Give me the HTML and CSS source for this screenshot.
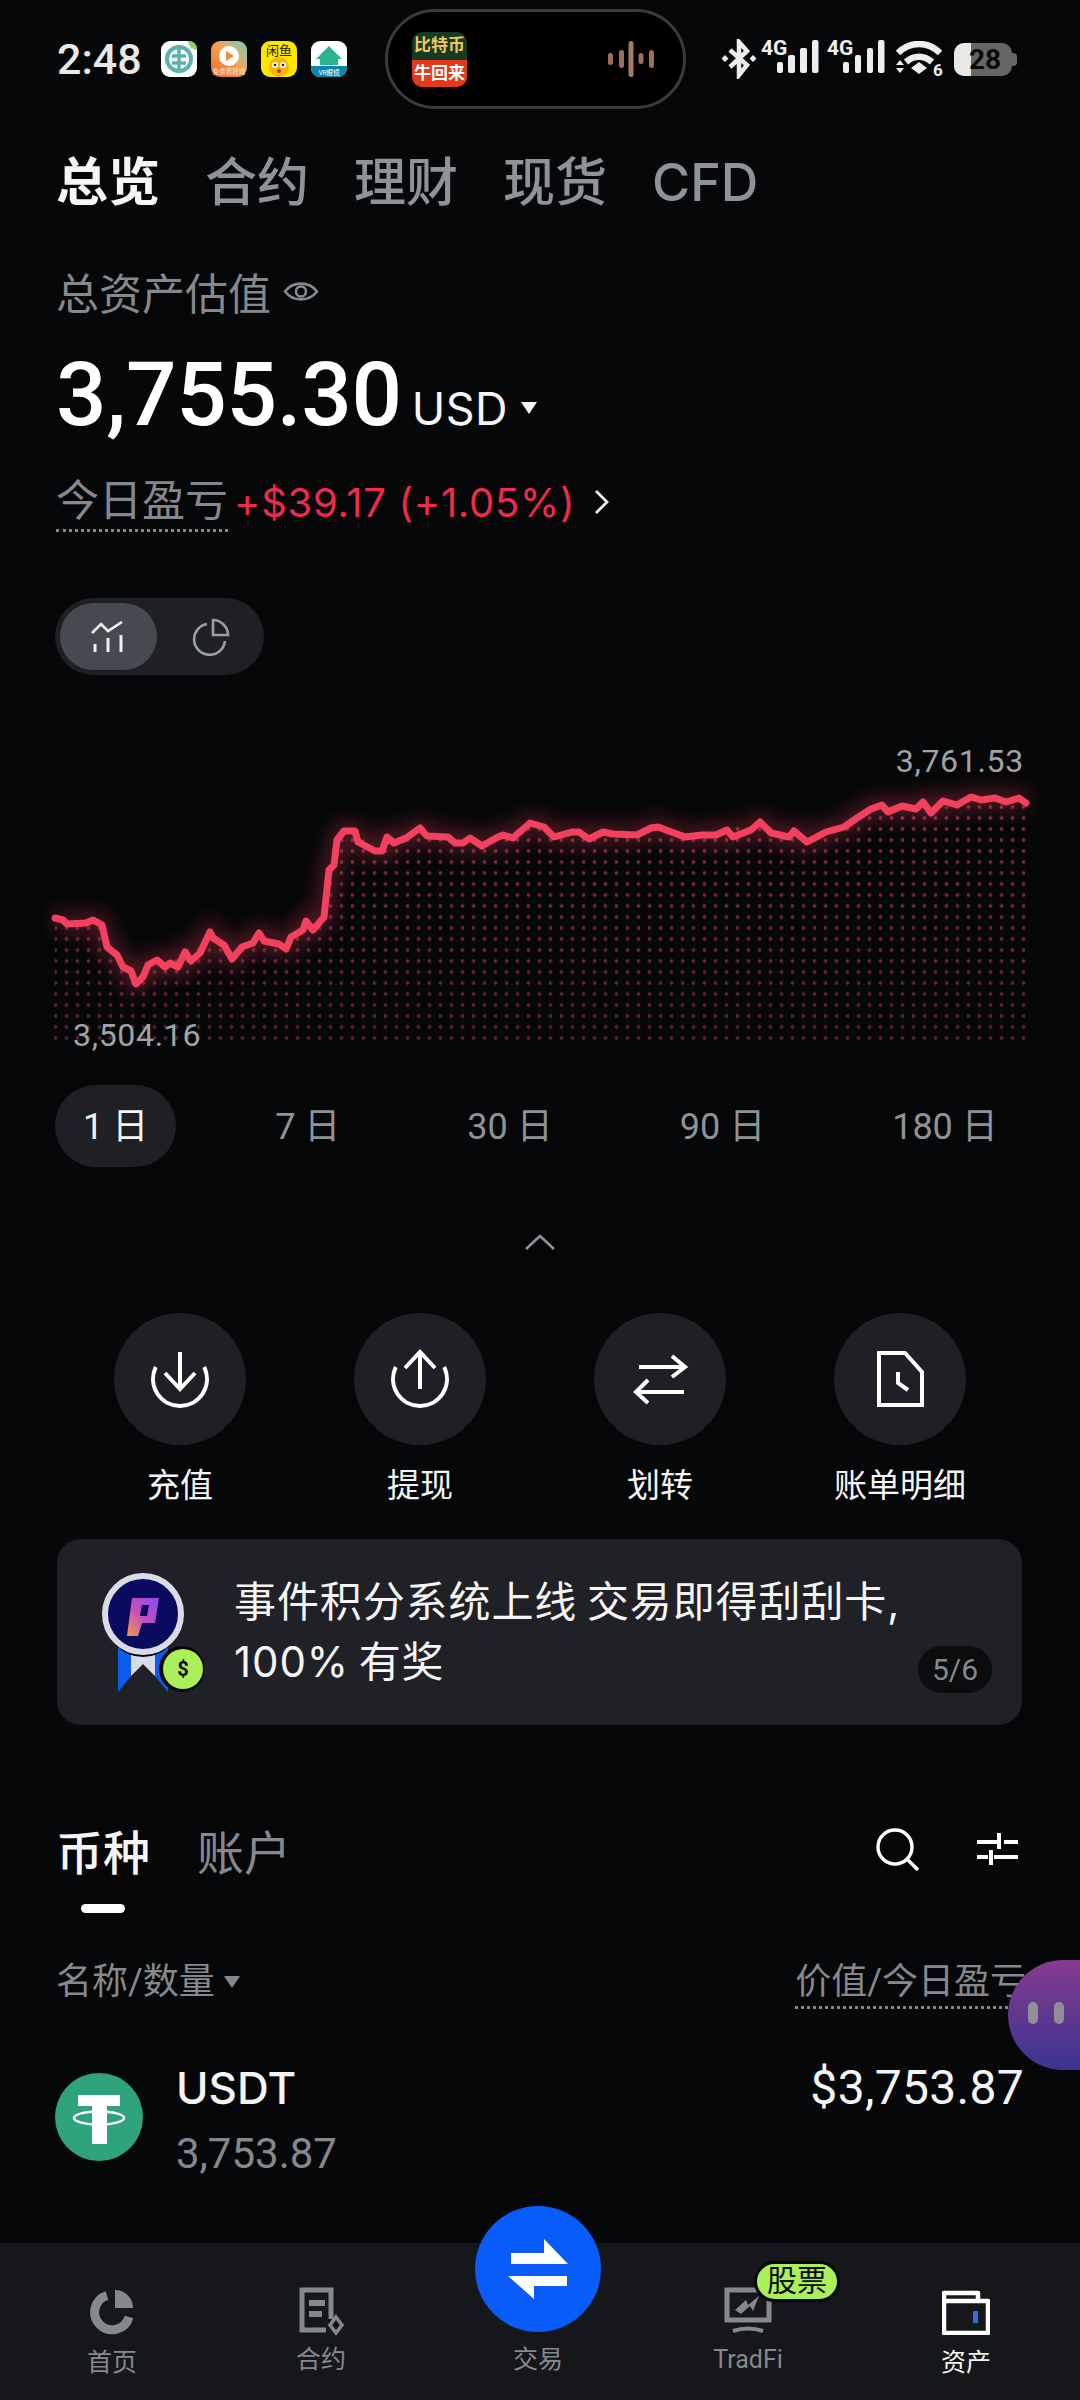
FILE: index.html
```html
<!DOCTYPE html>
<html lang="zh-CN">
<head>
    <meta charset="UTF-8">
    <title>资产</title>
    <link rel="stylesheet" href="styles.css">
</head>
<body>
    <div class="page">
        <div class="status">
            <span class="time">2:48</span>
            <div class="apps">
                <svg class="app" viewBox="0 0 36 36"><rect width="36" height="36" rx="9" fill="#fff"/><circle cx="18" cy="18" r="12" fill="none" stroke="#5cb3ac" stroke-width="4"/><path d="M18 4v28M11 15h14M11 22h14" stroke="#5cb3ac" stroke-width="3.4"/><path d="M28 0h-1a9 9 0 0 0 9 9V8a8 8 0 0 0-8-8z" fill="#8fd16a"/></svg>
                <svg class="app" viewBox="0 0 36 36"><defs><linearGradient id="appTwo" x1="0" y1="1" x2="1" y2="0"><stop offset="0" stop-color="#f4661f"/><stop offset=".55" stop-color="#f2a45a"/><stop offset="1" stop-color="#6fd3b8"/></linearGradient></defs><rect width="36" height="36" rx="9" fill="url(#appTwo)"/><circle cx="18" cy="15" r="10" fill="#fff"/><path d="M15 10l8 5-8 5z" fill="#f28a3c"/><text x="18" y="33" class="app-tiny" fill="#ffe9d9">免费看好戏</text></svg>
                <svg class="app" viewBox="0 0 36 36"><rect width="36" height="36" rx="9" fill="#ffe600"/><text x="18" y="14" class="app-mid" fill="#222">闲鱼</text><circle cx="18" cy="26" r="10" fill="#f7b500"/><circle cx="14" cy="24" r="3" fill="#fff"/><circle cx="22" cy="24" r="3" fill="#fff"/><circle cx="14" cy="24" r="1.3" fill="#222"/><circle cx="22" cy="24" r="1.3" fill="#222"/><circle cx="18" cy="30" r="2" fill="#c8321e"/></svg>
                <svg class="app" viewBox="0 0 36 36"><defs><clipPath id="appFour"><rect width="36" height="36" rx="9"/></clipPath></defs><g clip-path="url(#appFour)"><rect width="36" height="36" fill="#fff"/><rect y="25" width="36" height="11" fill="#0e86a8"/><path d="M18 5L5 18h4v6h18v-6h4z" fill="#27b58c"/><text x="18" y="33.500" class="app-tiny" fill="#fff">VR眼镜</text></g></svg>
            </div>
            <div class="island">
                <div class="island-app">
                    <div class="island-top">比特币</div>
                    <div class="island-bottom">牛回来</div>
                </div>
                <svg class="wave" viewBox="0 0 46 36"><g fill="#9c6f5c"><rect y="12" width="5" height="12" rx="2.500"/><rect x="11" y="9" width="5" height="18" rx="2.500"/><rect x="20.500" width="5" height="36" rx="2.500" fill="#a87a66"/><rect x="30.500" y="12" width="5" height="11" rx="2.500"/><rect x="41" y="9" width="5" height="18" rx="2.500"/></g></svg>
            </div>
            <div class="indicators">
                <svg class="bt" viewBox="0 0 36 40"><path d="M9 11l17 15-8 10V3l8 9-17 16" fill="none" stroke="#eee" stroke-width="4.500"/><path d="M4 16l3.500 3.500L4 23 .5 19.500zM32 16l3.500 3.500L32 23l-3.500-3.500z" fill="#eee"/></svg>
                <svg class="signal" viewBox="0 -10 58 48"><text x="0" y="15" class="net">4G</text><g fill="#eee"><rect x="16" y="22" width="6" height="11" rx="2"/><rect x="27" y="15" width="7" height="18" rx="2"/><rect x="39" y="8" width="7" height="25" rx="2"/><rect x="51" y="0" width="6.500" height="33" rx="2"/></g></svg>
                <svg class="signal" viewBox="0 -10 58 48"><text x="0" y="15" class="net">4G</text><g fill="#eee"><rect x="16" y="22" width="6" height="11" rx="2"/><rect x="28" y="15" width="6" height="18" rx="2"/><rect x="40" y="8" width="6" height="25" rx="2"/><rect x="51" y="0" width="6.500" height="33" rx="2"/></g></svg>
                <svg class="wifi" viewBox="0 0 50 44"><path d="M2 12c12-12 30-12 42 0M10 21c8-7 18-7 26 0" fill="none" stroke="#eee" stroke-width="6.500"/><path d="M15 27l8-6 8 6-8 6z" fill="#eee"/><path d="M0 24l4-5 4 5zM0 27l4 5 4-5z" fill="#eee"/><text x="37" y="35" class="wifi-six">6</text></svg>
                <div class="battery">
                    <span class="battery-fill"></span>
                    <span class="battery-num">28</span>
                </div>
            </div>
        </div>

        <nav class="top-tabs">
            <span class="top-tab is-active">总览</span>
            <span class="top-tab">合约</span>
            <span class="top-tab">理财</span>
            <span class="top-tab">现货</span>
            <span class="top-tab">CFD</span>
        </nav>

        <div class="total-label">
            <span>总资产估值</span>
            <svg class="eye" viewBox="0 0 36 27"><path d="M2 13.500C10 3 26 3 34 13.500 26 24 10 24 2 13.500z" fill="none" stroke="#85888d" stroke-width="2.600"/><circle cx="18" cy="13.500" r="5" fill="none" stroke="#85888d" stroke-width="2.600"/></svg>
        </div>

        <div class="balance">
            <span class="balance-num">3,755.30</span>
            <span class="balance-cur">USD</span>
            <span class="caret caret-white"></span>
        </div>

        <div class="pnl">
            <span class="dotted pnl-label">今日盈亏</span>
            <span class="pnl-value">+$39.17 (+1.05%)</span>
            <svg class="pnl-arrow" viewBox="0 0 18 26"><path d="M3 2l11 11L3 24" fill="none" stroke="#eee" stroke-width="2.800"/></svg>
        </div>

        <div class="toggle">
            <span class="toggle-btn is-active">
                <svg class="toggle-line" viewBox="0 0 34 32"><path d="M1 12l9-9 7 7L31 1" fill="none" stroke="#eee" stroke-width="2.600"/><path d="M4 23v8M17 17v14M30 14v17" stroke="#eee" stroke-width="3"/></svg>
            </span>
            <span class="toggle-btn">
                <svg class="toggle-pie" viewBox="0 0 38 38"><path d="M15 6a15.500 15.500 0 1 0 18 17" fill="none" stroke="#9a9da1" stroke-width="2.600"/><path d="M21 2c8 0 15 7 15 15H21z" fill="none" stroke="#9a9da1" stroke-width="2.600"/></svg>
            </span>
        </div>

        <div class="chart">
            <svg class="chart-svg" viewBox="0 0 1080 340">
                <defs>
                    <pattern id="dots" x="-5" y="4.500" width="11" height="11" patternUnits="userSpaceOnUse">
                        <circle cx="5.500" cy="5.500" r="1.900" fill="#8a3044"/>
                    </pattern>
                    <linearGradient id="dotFade" x1="0" y1="0" x2="0" y2="1">
                        <stop offset="0" stop-color="#fff"/>
                        <stop offset="1" stop-color="#999"/>
                    </linearGradient>
                    <mask id="dotMask"><rect width="1080" height="340" fill="url(#dotFade)"/></mask>
                    <clipPath id="under">
                        <path d="M55 198 L67 204 86 203 102 205 107 227 123 247 136 264 148 245 165 247 185 232 210 212 232 239 259 213 286 229 306 201 324 197 329 150 337 120 355 111 375 131 420 108 463 123 482 126 530 103 554 117 589 119 658 107 685 117 760 102 807 122 857 98 882 85 931 93 971 77 1026 83 V322 H54 Z"/>
                    </clipPath>
                    <filter id="glow" x="-10%" y="-30%" width="120%" height="160%">
                        <feGaussianBlur stdDeviation="10"/>
                    </filter>
                    <polyline id="line" points="55,198 63,200 67,204 86,203 93,200 102,205 107,227 117,235 123,247 131,251 136,264 143,257 148,245 157,240 165,247 170,243 178,247 185,232 191,241 200,233 210,212 213,218 224,225 232,239 242,227 253,223 259,213 264,221 279,224 286,229 291,217 303,210 306,201 313,210 324,197 329,150 334,145 337,120 344,111 355,111 358,122 375,131 382,131 387,117 394,123 406,118 420,108 427,116 448,117 455,123 463,123 470,118 482,126 496,118 503,115 513,118 530,103 544,107 554,117 572,112 579,112 589,119 603,112 613,114 637,115 651,108 658,107 685,117 702,115 716,115 727,110 733,117 751,110 760,102 771,113 789,117 794,111 807,122 826,112 844,107 857,98 871,89 882,85 888,92 902,86 916,89 923,82 931,93 943,81 957,85 971,77 981,80 995,78 1006,82 1019,78 1026,83"/>
                </defs>
                <g mask="url(#dotMask)">
                    <rect x="50" y="60" width="980" height="262" fill="url(#dots)" clip-path="url(#under)"/>
                </g>
                <use href="#line" class="line-glow" filter="url(#glow)"/>
                <use href="#line" class="line-main"/>
            </svg>
            <span class="chart-high">3,761.53</span>
            <span class="chart-low">3,504.16</span>
        </div>

        <div class="ranges">
            <span class="range is-active">1 日</span>
            <span class="range">7 日</span>
            <span class="range">30 日</span>
            <span class="range">90 日</span>
            <span class="range">180 日</span>
        </div>

        <svg class="collapse" viewBox="0 0 30 16"><path d="M1 15L15 2l14 13" fill="none" stroke="#8f9296" stroke-width="2.600"/></svg>

        <div class="actions">
            <div class="action">
                <span class="action-btn">
                    <svg class="action-icon" viewBox="0 0 64 64"><path d="M7.800 20A27 27 0 1 0 56.200 20M32 5v37M17 26l15 16 15-16"/></svg>
                </span>
                <span class="action-label">充值</span>
            </div>
            <div class="action">
                <span class="action-btn">
                    <svg class="action-icon" viewBox="0 0 64 64"><path d="M7.800 20A27 27 0 1 0 56.200 20M32 42V5M17 21L32 5l15 16"/></svg>
                </span>
                <span class="action-label">提现</span>
            </div>
            <div class="action">
                <span class="action-btn">
                    <svg class="action-icon" viewBox="0 0 64 64"><path d="M11 20h45M44 9l13 11-13 10M56 45H9M20 33L8 45l12 11"/></svg>
                </span>
                <span class="action-label">划转</span>
            </div>
            <div class="action">
                <span class="action-btn">
                    <svg class="action-icon" viewBox="0 0 64 64"><path d="M11 6h26l17 19v33H11zM30 25v11l10 7"/></svg>
                </span>
                <span class="action-label">账单明细</span>
            </div>
        </div>

        <div class="banner">
            <svg class="medal" viewBox="0 0 104 124">
                <defs>
                    <linearGradient id="logoGrad" x1="0" y1="1" x2="1" y2="0">
                        <stop offset="0" stop-color="#f09a4a"/>
                        <stop offset=".5" stop-color="#c04fc0"/>
                        <stop offset="1" stop-color="#8a4bf0"/>
                    </linearGradient>
                </defs>
                <path d="M18 74v46l13-16V74zM55 74v30l13 16V74z" fill="#0b5cf0"/>
                <path d="M31 74h24v30L43 92 31 104z" fill="#d9dce8"/>
                <circle cx="43" cy="48" r="37" fill="#060708"/>
                <circle cx="43" cy="42" r="38" fill="#0a0a5e" stroke="#d9dce8" stroke-width="6"/>
                <path d="M32 26h27l-4 25H42l-4 13H27zM42 33l-2 11h7l2-11z" fill="url(#logoGrad)" fill-rule="evenodd"/>
                <circle cx="82" cy="97" r="23" fill="#060708"/>
                <circle cx="83" cy="97" r="20" fill="#aaf05a"/>
                <text x="83" y="104" class="medal-coin">$</text>
            </svg>
            <p class="banner-text">事件积分系统上线 交易即得刮刮卡,<br>100% 有奖</p>
            <span class="banner-page">5/6</span>
        </div>

        <div class="asset-head">
            <div class="asset-tabs">
                <span class="asset-tab is-active">币种</span>
                <span class="asset-tab">账户</span>
            </div>
            <div class="asset-tools">
                <svg class="search" viewBox="0 0 44 44"><circle cx="20" cy="20" r="17" fill="none" stroke="#fff" stroke-width="3.400"/><path d="M32 32l11 11" stroke="#fff" stroke-width="3.400"/></svg>
                <svg class="sliders" viewBox="0 0 42 34"><path d="M1 10h20M28 10h14M23 1v16M1 25h11M18 25h24M15 18v15" stroke="#fff" stroke-width="4" fill="none"/></svg>
            </div>
        </div>
        <span class="asset-mark"></span>

        <div class="list-head">
            <div class="list-name">
                <span>名称/数量</span>
                <span class="caret caret-grey"></span>
            </div>
            <span class="dotted">价值/今日盈亏</span>
        </div>

        <div class="coin">
            <svg class="coin-icon" viewBox="0 0 88 88">
                <circle cx="44" cy="44" r="44" fill="#2fa37c"/>
                <path d="M23 22h42v11H52v38H37V33H23z" fill="#fff"/>
                <ellipse cx="44" cy="45" rx="25" ry="6.500" fill="none" stroke="#fff" stroke-width="2.400"/>
            </svg>
            <div class="coin-name">
                <span class="coin-title">USDT</span>
                <span class="coin-amount">3,753.87</span>
            </div>
            <span class="coin-value">$3,753.87</span>
        </div>

        <nav class="bottom-nav">
            <div class="nav-item">
                <svg class="nav-icon" viewBox="0 0 48 48"><path d="M19 8.500A17.500 17.500 0 1 0 41 30" fill="none" stroke="#85888d" stroke-width="9"/><path d="M27 21V3a18 18 0 0 1 18 18z" fill="#85888d"/></svg>
                <span class="nav-label nav-label-low">首页</span>
            </div>
            <div class="nav-item">
                <svg class="nav-icon" viewBox="0 0 48 48"><path d="M34 32V3H5v40h24" fill="none" stroke="#85888d" stroke-width="5"/><path d="M12 13h16v6H12zM12 24h13v6H12z" fill="#85888d"/><path d="M39 30l6 8-6 8-6-8z" fill="none" stroke="#85888d" stroke-width="3.500"/></svg>
                <span class="nav-label">合约</span>
            </div>
            <div class="nav-item">
                <span class="trade-btn">
                    <svg class="trade-icon" viewBox="0 0 126 126"><path d="M69 33l24 25H36V47h33zM59 93L33 70h59v10H59z" fill="#fff"/></svg>
                </span>
                <span class="nav-label">交易</span>
            </div>
            <div class="nav-item">
                <svg class="nav-icon" viewBox="0 0 48 48"><path d="M3 3h42v30H3z" fill="none" stroke="#85888d" stroke-width="5"/><path d="M11 23l11-10 2 5 11-9-6 15-3-5-9 8z" fill="#85888d"/><path d="M9 44q15-5 30 0" fill="none" stroke="#85888d" stroke-width="4"/></svg>
                <span class="nav-badge">股票</span>
                <span class="nav-label">TradFi</span>
            </div>
            <div class="nav-item">
                <svg class="nav-icon" viewBox="0 0 48 48"><path d="M2 6h34v8h10v32H2zM2 14h34" fill="none" stroke="#fff" stroke-width="4.500" stroke-linejoin="round"/><rect x="31" y="24" width="5" height="12" fill="#2a6fe8"/></svg>
                <span class="nav-label nav-label-low is-active">资产</span>
            </div>
        </nav>

        <div class="bubble">
            <span class="bubble-eye"></span>
            <span class="bubble-eye"></span>
        </div>
    </div>
</body>
</html>
```

FILE: styles.css
```css
* {
    box-sizing: border-box;
}
body {
    margin: 0;
    background-color: #060708;
    color: #f5f5f5;
    font-family: Roboto, "Noto Sans CJK SC", sans-serif;
}
svg {
    display: block;
}
.page {
    position: relative;
    display: flex;
    flex-direction: column;
    width: 1080px;
    height: 2400px;
    overflow: hidden;
}

/* status bar */
.status {
    display: flex;
    align-items: center;
    height: 118px;
    padding-left: 57px;
}
.time {
    width: 104px;
    font-size: 43px;
    font-weight: 500;
    color: #e8e8e8;
}
.apps {
    display: flex;
    gap: 14px;
}
.app {
    width: 36px;
    height: 36px;
}
.app-tiny {
    font-size: 6.5px;
    text-anchor: middle;
}
.app-mid {
    font-size: 13px;
    text-anchor: middle;
}
.island {
    display: flex;
    align-items: center;
    justify-content: space-between;
    width: 301px;
    height: 100px;
    margin-left: 38px;
    padding: 0 29px 0 24px;
    background-color: #000;
    border: 3px solid #3a3b3c;
    border-radius: 50px;
}
.island-app {
    width: 55px;
    height: 55px;
    border-radius: 10px;
    overflow: hidden;
    font-size: 17px;
    font-weight: 700;
    line-height: 27px;
    white-space: nowrap;
    text-align: center;
}
.island-top {
    height: 28px;
    background-color: #163a24;
    color: #f2c65a;
}
.island-bottom {
    height: 27px;
    background-color: #e2391c;
    color: #fff;
}
.wave {
    width: 46px;
    height: 36px;
}
.indicators {
    display: flex;
    align-items: center;
    margin-left: 35px;
}
.bt {
    width: 36px;
    height: 40px;
}
.signal {
    width: 58px;
    height: 48px;
    margin-left: 4px;
    margin-top: -11px;
}
.signal + .signal {
    margin-left: 8px;
}
.net {
    font-size: 21px;
    font-weight: 700;
    fill: #eee;
}
.wifi {
    width: 50px;
    height: 44px;
    margin: 8px -4px 0 11px;
}
.wifi-six {
    font-size: 17px;
    font-weight: 700;
    fill: #eee;
}
.battery {
    position: relative;
    display: flex;
    align-items: center;
    width: 58px;
    height: 33px;
    margin-left: 12px;
    background-color: #646664;
    border-radius: 10px;
}
.battery::after {
    content: "";
    position: absolute;
    right: -5px;
    top: 10px;
    width: 5px;
    height: 13px;
    background-color: #646664;
    border-radius: 0 4px 4px 0;
}
.battery-fill {
    width: 17px;
    height: 33px;
    background-color: #e8e8e8;
    border-radius: 10px 0 0 10px;
}
.battery-num {
    margin-left: -2px;
    font-size: 28px;
    font-weight: 700;
    color: #0a0a0a;
}

/* summary */
.top-tabs {
    display: flex;
    gap: 45px;
    height: 70px;
    margin-top: 30px;
    padding-left: 56px;
    font-family: Inter, "Noto Sans CJK SC", sans-serif;
    font-size: 52px;
    line-height: 70px;
    color: #8f9296;
    font-weight: 500;
}
.top-tab.is-active {
    color: #f5f5f5;
    font-weight: 700;
}
.total-label {
    display: flex;
    align-items: center;
    gap: 12px;
    height: 60px;
    margin-top: 43px;
    padding-left: 56px;
    font-size: 43px;
    color: #85888d;
}
.eye {
    width: 36px;
    height: 27px;
}
.balance {
    display: flex;
    align-items: baseline;
    height: 100px;
    margin-top: 24px;
    padding-left: 56px;
    line-height: 100px;
}
.balance-num {
    font-size: 89px;
    font-weight: 500;
    letter-spacing: -.3px;
    color: #fff;
}
.balance-cur {
    margin-left: 10px;
    font-family: Inter, sans-serif;
    font-size: 45px;
    letter-spacing: .5px;
}
.caret {
    display: inline-block;
    border-style: solid;
    border-color: transparent;
    border-width: 12px 8px 0;
}
.caret-white {
    margin-left: 13px;
    border-top-color: #f5f5f5;
    transform: translateY(-11px);
}
.caret-grey {
    margin-left: 9px;
    border-top-color: #85888d;
}
.pnl {
    display: flex;
    align-items: center;
    height: 60px;
    margin-top: 27px;
    padding-left: 56px;
}
.dotted {
    border-bottom: 3px dotted #85888d;
}
.pnl-label {
    font-size: 43px;
    line-height: 56px;
    color: #85888d;
}
.pnl-value {
    margin-left: 6px;
    font-family: Inter, sans-serif;
    font-size: 40px;
    letter-spacing: .7px;
    color: #f0294f;
}
.pnl-arrow {
    width: 18px;
    height: 26px;
    margin-left: 18px;
}
.toggle {
    display: flex;
    gap: 6px;
    width: 209px;
    height: 77px;
    margin: 66px 0 0 55px;
    padding: 5px;
    background-color: #1e2024;
    border-radius: 39px;
}
.toggle-btn {
    display: flex;
    align-items: center;
    justify-content: center;
    width: 99px;
    height: 67px;
    border-radius: 34px;
}
.toggle-btn.is-active {
    background-color: #464a50;
}
.toggle-line {
    width: 34px;
    height: 32px;
}
.toggle-pie {
    width: 38px;
    height: 38px;
}

/* chart */
.chart {
    position: relative;
    height: 340px;
    margin-top: 45px;
}
.chart-svg {
    width: 1080px;
    height: 340px;
}
.line-glow {
    fill: none;
    stroke: #f0405e;
    stroke-width: 14;
    opacity: .4;
}
.line-main {
    fill: none;
    stroke: #f4405f;
    stroke-width: 7;
    stroke-linejoin: round;
    stroke-linecap: round;
}
.chart-high, .chart-low {
    position: absolute;
    font-size: 32px;
    letter-spacing: .7px;
    line-height: 40px;
    color: #a0a3a7;
}
.chart-high {
    right: 56px;
    top: 21px;
}
.chart-low {
    left: 73px;
    top: 295px;
}
.ranges {
    display: flex;
    gap: 71px;
    height: 82px;
    margin: 25px 0 0 55px;
    font-size: 36px;
    line-height: 85px;
    color: #8f9296;
}
.range {
    padding: 0 28px;
    border-radius: 41px;
}
.range.is-active {
    background-color: #1e2024;
    color: #f5f5f5;
}
.collapse {
    width: 30px;
    height: 16px;
    margin: 67px 0 0 525px;
}

/* actions */
.actions {
    display: grid;
    grid-template-columns: repeat(4, 240px);
    margin: 63px 0 0 60px;
}
.action {
    display: flex;
    flex-direction: column;
    align-items: center;
}
.action-btn {
    display: flex;
    align-items: center;
    justify-content: center;
    width: 132px;
    height: 132px;
    background-color: #1e2024;
    border-radius: 50%;
}
.action-icon {
    width: 64px;
    height: 64px;
    fill: none;
    stroke: #fff;
    stroke-width: 4;
}
.action-label {
    margin-top: 19px;
    font-size: 33px;
    line-height: 44px;
}

/* banner */
.banner {
    position: relative;
    display: flex;
    gap: 30px;
    height: 186px;
    margin: 31px 58px 0 57px;
    padding: 33px 0 0 43px;
    background-color: #1f2126;
    border-radius: 24px;
}
.medal {
    width: 104px;
    height: 124px;
}
.medal-coin {
    font-size: 20px;
    font-weight: 700;
    text-anchor: middle;
    fill: #0a0a0a;
}
.banner-text {
    margin: 0;
    font-family: Inter, "Noto Sans CJK SC", sans-serif;
    font-size: 42px;
    letter-spacing: .9px;
    word-spacing: -3px;
    line-height: 60px;
    color: #f5f5f5;
}
.banner-page {
    position: absolute;
    right: 30px;
    bottom: 32px;
    width: 74px;
    height: 47px;
    background-color: #0b0c0e;
    border-radius: 24px;
    font-size: 30px;
    line-height: 47px;
    text-align: center;
    color: #85888d;
}

/* asset list */
.asset-head {
    display: flex;
    align-items: center;
    justify-content: space-between;
    height: 60px;
    margin-top: 94px;
    padding: 0 62px 0 56px;
}
.asset-tabs {
    display: flex;
    gap: 47px;
    font-size: 47px;
    color: #85888d;
}
.asset-tab.is-active {
    color: #f5f5f5;
    font-weight: 500;
}
.asset-tools {
    display: flex;
    align-items: center;
    gap: 57px;
}
.search {
    width: 44px;
    height: 44px;
}
.sliders {
    width: 42px;
    height: 34px;
}
.asset-mark {
    width: 44px;
    height: 9px;
    margin: 25px 0 0 81px;
    background-color: #fff;
    border-radius: 5px;
}
.list-head {
    display: flex;
    align-items: flex-start;
    justify-content: space-between;
    height: 56px;
    margin-top: 45px;
    padding: 0 54px 0 56px;
    font-size: 36px;
    line-height: 48px;
    color: #85888d;
}
.list-name {
    display: flex;
    align-items: center;
}
.coin {
    display: flex;
    margin-top: 59px;
    padding: 0 56px 0 55px;
}
.coin-icon {
    width: 88px;
    height: 88px;
}
.coin-name {
    display: flex;
    flex-direction: column;
    margin-left: 33px;
    flex: 1;
}
.coin-title {
    margin-top: -12px;
    font-family: Inter, sans-serif;
    font-size: 44px;
    font-weight: 500;
    line-height: 54px;
}
.coin-amount {
    margin-top: 11px;
    font-size: 42px;
    line-height: 56px;
    color: #85888d;
}
.coin-value {
    margin-top: -12px;
    font-size: 48px;
    letter-spacing: .3px;
    line-height: 54px;
}

/* bottom nav */
.bottom-nav {
    display: grid;
    grid-template-columns: 209px 217px 210px 218px 160px;
    justify-items: start;
    height: 157px;
    margin-top: auto;
    padding-left: 32px;
    background-color: #15171a;
}
.nav-item {
    position: relative;
    display: flex;
    flex-direction: column;
    align-items: center;
    width: 160px;
    padding-top: 44px;
}
.nav-icon {
    width: 48px;
    height: 48px;
}
.nav-label {
    margin-top: 8px;
    font-size: 25px;
    line-height: 34px;
    color: #85888d;
}
.nav-label-low {
    margin-top: 11px;
}
.nav-label.is-active {
    color: #f5f5f5;
}
.trade-btn {
    display: block;
    width: 126px;
    height: 126px;
    margin-top: -81px;
    margin-bottom: 3px;
    background-color: #0a5cfa;
    border-radius: 50%;
}
.trade-icon {
    width: 126px;
    height: 126px;
}
.nav-badge {
    position: absolute;
    left: 86px;
    top: 18px;
    width: 86px;
    height: 41px;
    background-color: #aaf05a;
    border: 3px solid #060708;
    border-radius: 21px;
    font-size: 30px;
    line-height: 34px;
    text-align: center;
    color: #0a0a0a;
}
.bubble {
    position: absolute;
    right: 0;
    top: 1960px;
    display: flex;
    align-items: center;
    gap: 16px;
    width: 72px;
    height: 110px;
    padding: 0 0 4px 20px;
    background: linear-gradient(#853a8e, #3a3590);
    border-radius: 55px 0 0 55px;
}
.bubble-eye {
    width: 10px;
    height: 22px;
    background-color: #8f8f9a;
    border-radius: 5px;
}
```
